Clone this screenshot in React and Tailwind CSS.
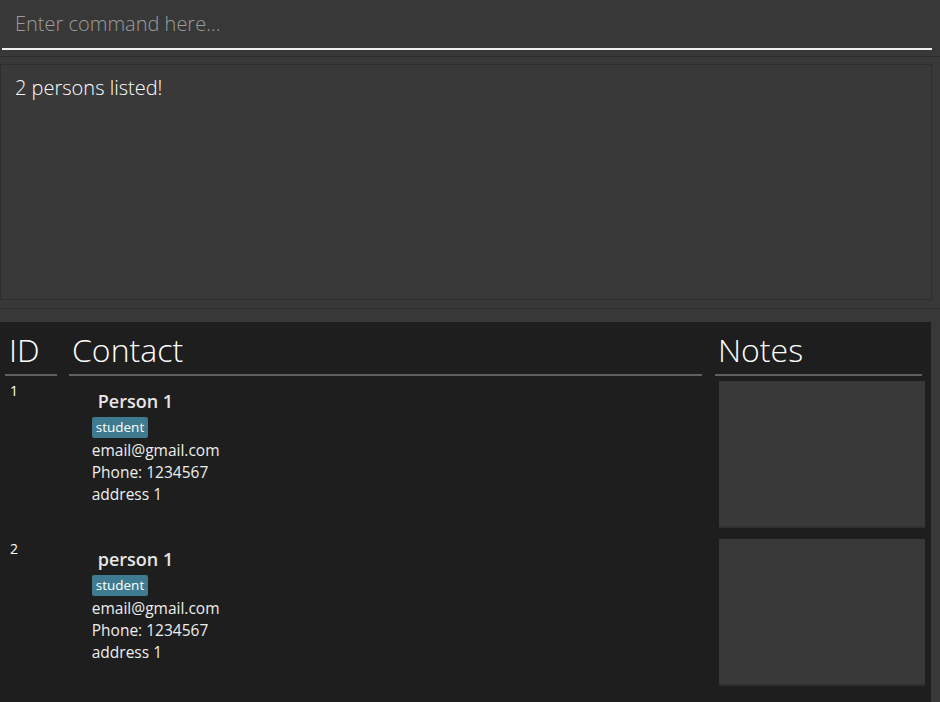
import React from "react";

const people = [
  { id: 1, name: "Person 1" },
  { id: 2, name: "person 1" },
];

export default function App() {
  return (
    <div className="w-[940px] h-[702px] bg-[#383838] overflow-hidden flex flex-col" style={{ fontFamily: '"Open Sans", "Noto Sans", sans-serif' }}>
      {/* command box */}
      <div className="h-[57px] border-b border-[#2c2c2c] shrink-0">
        <div className="ml-[2px] w-[930px] h-[50px] border-b-2 border-[#f0f0f0] pl-[13px] flex items-center">
          <span className="text-[20px] font-light text-[#9c9c9c] leading-none">Enter command here...</span>
        </div>
      </div>
      {/* result display */}
      <div className="mt-[7px] w-[932px] h-[236px] bg-[#393939] border border-[#2e2e2e] pl-[14px] pt-[9px] shrink-0">
        <span className="text-[20px] font-light text-white leading-[28px]">2 persons listed!</span>
      </div>
      <div className="h-[8px] shrink-0"></div>
      <div className="h-px bg-[#2e2e2e] shrink-0"></div>
      <div className="h-[13px] shrink-0"></div>
      {/* list panel */}
      <div className="w-[931px] flex-1 bg-[#1e1e1e] pl-[5px] pr-[6px]">
        <div className="flex h-[54px]">
          <div className="w-[52px] border-b-2 border-[#606060] flex items-end pl-[4px]">
            <span className="text-[32px] font-light text-white leading-none pb-[8px]">ID</span>
          </div>
          <div className="w-[12px]"></div>
          <div className="w-[633px] border-b-2 border-[#606060] flex items-end pl-[3px]">
            <span className="text-[32px] font-light text-white leading-none pb-[8px]">Contact</span>
          </div>
          <div className="w-[13px]"></div>
          <div className="w-[207px] border-b-2 border-[#606060] flex items-end pl-[3px]">
            <span className="text-[32px] font-light text-white leading-none pb-[8px]">Notes</span>
          </div>
        </div>
        {people.map((p) => (
          <div key={p.id} className="flex h-[158px]">
            <div className="w-[52px] pl-[5px] pt-[8px]">
              <span className="block text-[14px] text-white leading-none">{p.id}</span>
            </div>
            <div className="w-[12px]"></div>
            <div className="w-[633px] pl-[23px] pt-[14px] flex flex-col items-start">
              <div className="pl-[6px] text-[18px] font-semibold text-[#e6e6e6] leading-[22px]">{p.name}</div>
              <div className="mt-[5px] bg-[#3e7b91] rounded-[2px] px-[4px] h-[21px] flex items-center text-[13.5px] text-white leading-none">student</div>
              <div className="mt-[1px] text-[15.5px] text-[#eeeeee] leading-[22px]">email@gmail.com</div>
              <div className="text-[15.5px] text-[#eeeeee] leading-[22px]">Phone: 1234567</div>
              <div className="text-[15.5px] text-[#eeeeee] leading-[22px]">address 1</div>
            </div>
            <div className="w-[17px]"></div>
            <div className="pt-[5px] pl-[3px]">
              <div className="w-[206px] h-[147px] bg-[#393939] border-b-2 border-[#2f2f2f]"></div>
            </div>
          </div>
        ))}
      </div>
    </div>
  );
}
